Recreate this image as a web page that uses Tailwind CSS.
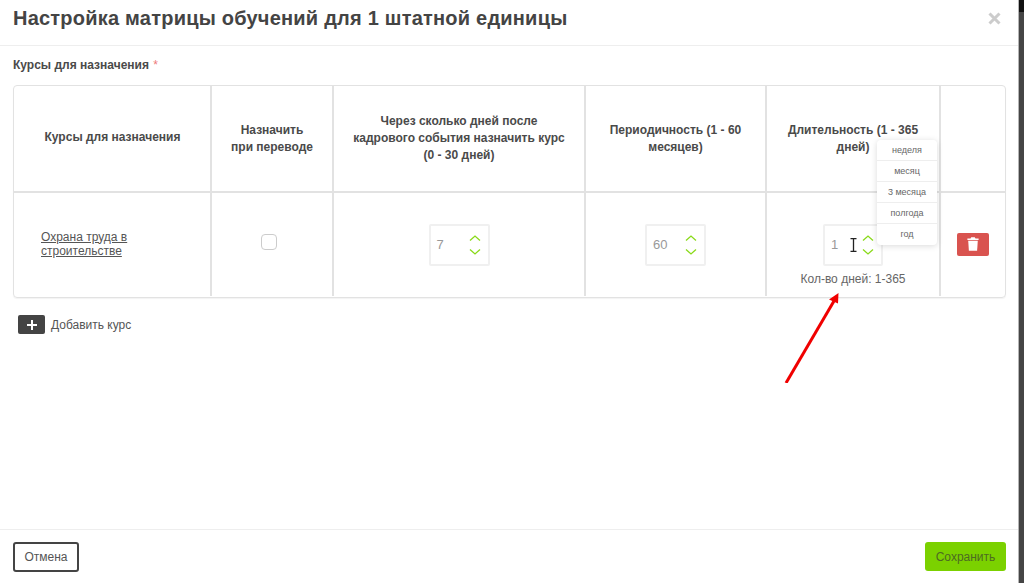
<!DOCTYPE html>
<html lang="ru">
  <head>
    <meta charset="UTF-8" />
    <title>Настройка матрицы обучений</title>
    <script src="https://cdn.jsdelivr.net/npm/@tailwindcss/browser@4"></script>
  </head>
  <body class="flex h-[583px] w-[1024px] overflow-hidden bg-[#454545] font-['Liberation_Sans',Arial,sans-serif] text-[#444]">
    <div class="flex h-[583px] w-[1019px] shrink-0 flex-col border-r border-[#b5b5b5] bg-white">
      <!-- Header -->
      <header class="flex h-[46px] shrink-0 items-center justify-between border-b border-[#eeeeee] pr-[17px] pb-[9px] pl-[13px]">
        <h1 class="text-[20px] font-bold tracking-[0.22px] text-[#444444]">Настройка матрицы обучений для 1 штатной единицы</h1>
        <svg class="h-[13px] w-[13px]" viewBox="0 0 13 13">
          <path d="M1.500 1.500 L11.500 11.500 M11.500 1.500 L1.500 11.500" stroke="#cccccc" stroke-width="3" fill="none" />
        </svg>
      </header>

      <!-- Body -->
      <main class="relative flex-1 pt-[13px] pr-[12px] pl-[13px]">
        <div class="h-[13px] text-[12px] leading-[13px] font-bold text-[#4a4a4a]">Курсы для назначения <span class="ml-[1px] font-normal text-[#ee7a7a]">*</span></div>

        <div class="mt-[13px] h-[213px] w-[993px] overflow-hidden rounded-[4px] border border-[#e2e2e2] shadow-[0_1px_1px_rgba(0,0,0,0.05)]">
          <table class="w-full table-fixed border-collapse">
            <colgroup>
              <col class="w-[197px]" />
              <col class="w-[122px]" />
              <col class="w-[252px]" />
              <col class="w-[181px]" />
              <col class="w-[174px]" />
              <col />
            </colgroup>
            <thead>
              <tr class="h-[106px] border-b-2 border-[#e2e2e2] text-[12px] leading-[17px] font-bold text-[#4a4a4a]">
                <th class="border-r-2 border-[#e2e2e2] px-[16px] pb-[2px] pl-[17px] font-bold">Курсы для назначения</th>
                <th class="border-r-2 border-[#e2e2e2] px-[12px] font-bold">Назначить<br />при переводе</th>
                <th class="border-r-2 border-[#e2e2e2] px-[12px] font-bold">Через сколько дней после<br />кадрового события назначить курс<br />(0 - 30 дней)</th>
                <th class="border-r-2 border-[#e2e2e2] px-[12px] font-bold">Периодичность (1 - 60<br />месяцев)</th>
                <th class="border-r-2 border-[#e2e2e2] px-[12px] font-bold">Длительность (1 - 365<br />дней)</th>
                <th></th>
              </tr>
            </thead>
            <tbody>
              <tr class="h-[104px] text-[12px] text-[#555]">
                <td class="border-r-2 border-[#e2e2e2] pb-[2px] pl-[27px] leading-[14px]">
                  <a href="#" class="underline">Охрана труда в<br />строительстве</a>
                </td>
                <td class="border-r-2 border-[#e2e2e2] pr-[6px] pb-[6px] text-center">
                  <span class="inline-block h-[16px] w-[16px] rounded-[4px] border border-[#cccccc] bg-white align-middle"></span>
                </td>
                <td class="border-r-2 border-[#e2e2e2]">
                  <div class="mx-auto flex h-[42px] w-[61px] items-center justify-between rounded-[2px] border-2 border-[#f0f0f0] pr-[7px] pl-[6px] text-[13px] text-[#999999]">
                    <span>7</span>
                    <svg class="h-[20px] w-[12px]" viewBox="0 0 12 20"><path d="M1 5.500 L6 1 L11 5.500 M1 14.500 L6 19 L11 14.500" stroke="#8ada1a" stroke-width="1.300" fill="none" /></svg>
                  </div>
                </td>
                <td class="border-r-2 border-[#e2e2e2]">
                  <div class="mx-auto flex h-[42px] w-[61px] items-center justify-between rounded-[2px] border-2 border-[#f0f0f0] pr-[7px] pl-[6px] text-[13px] text-[#999999]">
                    <span>60</span>
                    <svg class="h-[20px] w-[12px]" viewBox="0 0 12 20"><path d="M1 5.500 L6 1 L11 5.500 M1 14.500 L6 19 L11 14.500" stroke="#8ada1a" stroke-width="1.300" fill="none" /></svg>
                  </div>
                </td>
                <td class="border-r-2 border-[#e2e2e2] pt-[31px] text-center align-top">
                  <div class="mx-auto flex h-[42px] w-[60px] items-center justify-between rounded-[2px] border-2 border-[#f0f0f0] pr-[7px] pl-[6px] text-[13px] text-[#999999]">
                    <span>1</span>
                    <svg class="h-[20px] w-[12px]" viewBox="0 0 12 20"><path d="M1 5.500 L6 1 L11 5.500 M1 14.500 L6 19 L11 14.500" stroke="#8ada1a" stroke-width="1.300" fill="none" /></svg>
                  </div>
                  <div class="mt-[6px] text-[12px] leading-[14px] text-[#666]">Кол-во дней: 1-365</div>
                </td>
                <td class="text-center">
                  <button class="inline-flex h-[23px] w-[32px] items-center justify-center rounded-[2px] bg-[#d9534f]">
                    <svg class="h-[14px] w-[12px]" viewBox="0 0 12 14" fill="#ffffff">
                      <path d="M4.200 0.300 H7.800 L8.500 1.600 H11.600 V3 H0.400 V1.600 H3.500 Z" />
                      <path d="M1.200 3.800 H10.800 L10.100 13.700 H1.900 Z" />
                    </svg>
                  </button>
                </td>
              </tr>
            </tbody>
          </table>
        </div>

        <button class="mt-[17px] ml-[5px] flex items-center gap-[6px] text-[12px] text-[#555]">
          <span class="flex h-[19px] w-[27px] items-center justify-center rounded-[2px] bg-[#444444]">
            <svg class="h-[10px] w-[10px]" viewBox="0 0 10 10"><path d="M5 0 V10 M0 5 H10" stroke="#ffffff" stroke-width="2" fill="none" /></svg>
          </span>
          Добавить курс
        </button>

        <!-- Period dropdown opened over the table -->
        <ul class="absolute top-[94px] left-[877px] w-[60px] rounded-[4px] bg-white text-center text-[9px] leading-[21px] text-[#666] shadow-[0_1px_6px_rgba(0,0,0,0.15)]">
          <li class="h-[21px] border-b border-[#eeeeee]">неделя</li>
          <li class="h-[21px] border-b border-[#eeeeee]">месяц</li>
          <li class="h-[21px] border-b border-[#eeeeee]">3 месяца</li>
          <li class="h-[21px] border-b border-[#eeeeee]">полгода</li>
          <li class="h-[21px]">год</li>
        </ul>

        <!-- Text cursor -->
        <svg class="absolute top-[192px] left-[850px] h-[14px] w-[7px]" viewBox="0 0 7 14">
          <path d="M0.500 0.700 H6.500 M3.500 0.700 V13.300 M0.500 13.300 H6.500" stroke="#222222" stroke-width="1.300" fill="none" />
        </svg>

        <!-- Red annotation arrow -->
        <svg class="absolute top-[247px] left-[780px] h-[90px] w-[70px]" viewBox="0 0 70 90">
          <path d="M6 90 L54 8" stroke="#f00000" stroke-width="3" fill="none" />
          <path d="M58.500 0 L49 6.500 L58 10.500 Z" fill="#f00000" />
        </svg>
      </main>

      <!-- Footer -->
      <footer class="flex h-[54px] shrink-0 items-center justify-between border-t border-[#eeeeee] pr-[12px] pl-[13px]">
        <button class="h-[30px] w-[66px] rounded-[3px] border-2 border-[#444444] bg-white text-[12px] text-[#555]">Отмена</button>
        <button class="h-[29px] w-[81px] rounded-[3px] bg-[#7bd100] text-[12px] text-[#4d6b22]">Сохранить</button>
      </footer>
    </div>
    <aside class="h-[12px] flex-1 bg-[#111111]"></aside>
  </body>
</html>
